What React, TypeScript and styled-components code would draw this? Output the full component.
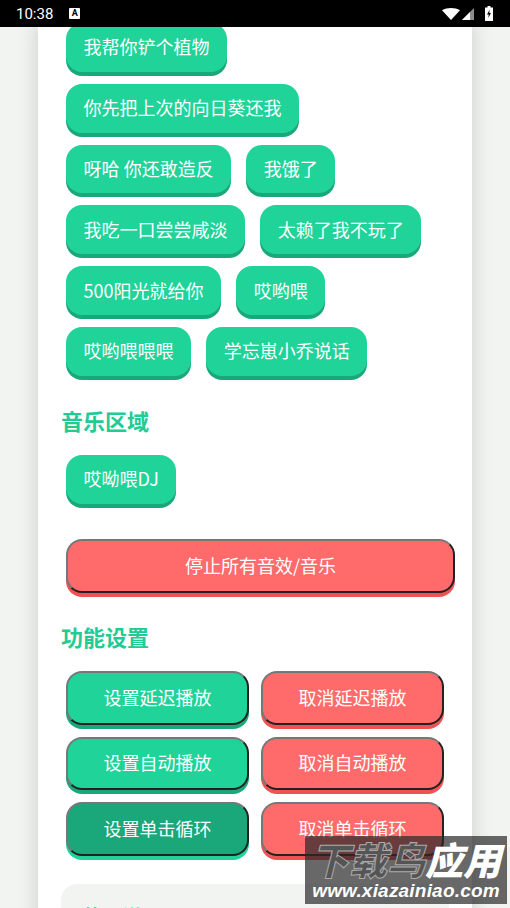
import React from 'react';
import styled, {createGlobalStyle} from 'styled-components';

const GlobalStyle = createGlobalStyle`
    html, body {
        margin: 0;
        padding: 0;
        height: 100%;
        background: #f2f4f2;
    }
`

const voiceRows = [
    ['我帮你铲个植物'],
    ['你先把上次的向日葵还我'],
    ['呀哈 你还敢造反', '我饿了'],
    ['我吃一口尝尝咸淡', '太赖了我不玩了'],
    ['500阳光就给你', '哎哟喂'],
    ['哎哟喂喂喂', '学忘崽小乔说话'],
];

const settingRows = [
    {set: '设置延迟播放', cancel: '取消延迟播放', active: false},
    {set: '设置自动播放', cancel: '取消自动播放', active: false},
    {set: '设置单击循环', cancel: '取消单击循环', active: true},
];

export default function App() {
    return (
        <Screen>
            <GlobalStyle/>
            <StatusBar>
                <StatusLeft>
                    <Clock>10:38</Clock>
                    <NoticeIcon>A</NoticeIcon>
                </StatusLeft>
                <StatusRight>
                    <svg width="18" height="12" viewBox="0 0 18 12">
                        <path d="M0 2.200C2.500 .7 5.800 0 9 0s6.500 .7 9 2.200L9 12z" fill="#fff"/>
                    </svg>
                    <svg width="12" height="12" viewBox="0 0 12 12">
                        <path d="M12 0v12H0z" fill="#fff" opacity=".55"/>
                        <path d="M8 4v8H0z" fill="#fff"/>
                    </svg>
                    <svg width="8" height="15" viewBox="0 0 8 15">
                        <path d="M2.500 0h3v1.500H8V15H0V1.500h2.500z" fill="#fff"/>
                        <path d="M4.800 3.500 2 8.500h1.800l-.6 3.500 2.800-5H4.200z" fill="#000"/>
                    </svg>
                </StatusRight>
            </StatusBar>
            <Viewport>
                <Card>
                    <ButtonGroup>
                        {voiceRows.map((row) => (
                            <ButtonRow key={row[0]}>
                                {row.map((label) => <SoundButton key={label}>{label}</SoundButton>)}
                            </ButtonRow>
                        ))}
                    </ButtonGroup>
                    <SectionTitle>音乐区域</SectionTitle>
                    <ButtonRow>
                        <SoundButton>哎呦喂DJ</SoundButton>
                    </ButtonRow>
                    <StopButton>停止所有音效/音乐</StopButton>
                    <SettingsTitle>功能设置</SettingsTitle>
                    <SettingsGroup>
                        {settingRows.map((row) => (
                            <ButtonRow key={row.set}>
                                <SettingButton $active={row.active}>{row.set}</SettingButton>
                                <CancelButton>{row.cancel}</CancelButton>
                            </ButtonRow>
                        ))}
                    </SettingsGroup>
                    <InfoPanel>
                        <InfoTitle>使用说明</InfoTitle>
                    </InfoPanel>
                </Card>
                <Watermark>
                    <WatermarkTitle>
                        <OutlineText>下载鸟</OutlineText>
                        <SolidText>应用</SolidText>
                    </WatermarkTitle>
                    <WatermarkUrl>www.xiazainiao.com</WatermarkUrl>
                </Watermark>
            </Viewport>
        </Screen>
    );
}

const Screen = styled.div`
    width: 510px;
    height: 908px;
    overflow: hidden;
    display: flex;
    flex-direction: column;
    background: #f2f4f2;
    font-family: "Noto Sans CJK SC", "Noto Sans", sans-serif;
`

const StatusBar = styled.div`
    flex: 0 0 27px;
    background: #000;
    display: flex;
    align-items: center;
    justify-content: space-between;
    padding: 0 17px 0 16px;
    position: relative;
    z-index: 2;
`

const StatusLeft = styled.div`
    display: flex;
    align-items: center;
    gap: 16px;
`

const Clock = styled.span`
    font-family: Roboto, sans-serif;
    font-size: 15px;
    color: #fff;
`

const NoticeIcon = styled.span`
    width: 11px;
    height: 11px;
    border-radius: 1px;
    background: #fff;
    color: #000;
    font-family: Roboto, sans-serif;
    font-size: 9px;
    font-weight: 700;
    line-height: 11px;
    text-align: center;
`

const StatusRight = styled.div`
    display: flex;
    align-items: center;
    gap: 2px;

    svg:last-child {
        margin-left: 9px;
    }
`

const Viewport = styled.div`
    flex: 1;
    position: relative;
    overflow: hidden;
    padding: 0 38px;
`

const Card = styled.div`
    margin-top: -4px;
    background: #fff;
    box-shadow: 0 0 20px rgba(0, 0, 0, 0.16);
    padding: 0 23px;
    height: 1000px;
`

const ButtonGroup = styled.div`
    display: flex;
    flex-direction: column;
    gap: 8px;
`

const ButtonRow = styled.div`
    display: flex;
    gap: 15px;
    padding-left: 5px;
`

const BaseButton = styled.div`
    box-sizing: border-box;
    height: 48.800px;
    margin-bottom: 4px;
    padding-bottom: 2px;
    border-radius: 16px;
    color: #fff;
    font-size: 18px;
    display: flex;
    align-items: center;
    justify-content: center;
`

const SoundButton = styled(BaseButton)`
    padding-left: 17.600px;
    padding-right: 17.600px;
    background: #20d398;
    box-shadow: 0 4px 0 #1aa87a;
`

const SectionTitle = styled.h2`
    margin: 24px 0 18px;
    font-size: 22px;
    line-height: 33px;
    font-weight: 700;
    color: #20cc94;
`

const SettingsTitle = styled(SectionTitle)`
    margin: 27px 0 18.400px;
`

const OutsetButton = styled(BaseButton)`
    border-style: solid;
    border-width: 2.500px;
    border-color: #777 #222 #222 #777;
`

const StopButton = styled(OutsetButton)`
    margin: 31px 0 0 5px;
    width: 389px;
    height: 54px;
    background: #ff6b6b;
    box-shadow: 0 4px 0 #ee5253;
`

const SettingsGroup = styled.div`
    display: flex;
    flex-direction: column;
    gap: 8px;

    ${ButtonRow} {
        gap: 12px;
    }
`

const SettingButton = styled(OutsetButton)<{$active: boolean}>`
    width: 183px;
    height: 53.600px;
    background: ${(props) => props.$active ? '#1aa87a' : '#20d398'};
    box-shadow: 0 4px 0 ${(props) => props.$active ? '#20d398' : '#1aa87a'};
`

const CancelButton = styled(OutsetButton)`
    width: 183px;
    height: 53.600px;
    background: #ff6b6b;
    box-shadow: 0 4px 0 #ee5253;
`

const InfoPanel = styled.div`
    margin-top: 24px;
    height: 120px;
    background: #f2f4f2;
    border-radius: 16px;
    padding: 18px 21px;
`

const InfoTitle = styled.div`
    font-size: 20px;
    line-height: 30px;
    font-weight: 700;
    color: #20cc94;
`

const Watermark = styled.div`
    position: absolute;
    left: 305px;
    top: 809px;
    width: 202px;
    height: 68px;
    background: rgba(40, 40, 40, 0.7);
    display: flex;
    flex-direction: column;
    align-items: center;
`

const WatermarkTitle = styled.div`
    display: flex;
    font-size: 38px;
    line-height: 45px;
    font-weight: 900;
    font-style: italic;
`

const OutlineText = styled.span`
    color: #555;
    -webkit-text-stroke: 1px #aaa;
`

const SolidText = styled.span`
    color: #fff;
`

const WatermarkUrl = styled.div`
    font-family: "Liberation Sans", sans-serif;
    font-size: 19px;
    line-height: 20px;
    font-weight: 700;
    font-style: italic;
    letter-spacing: 0.2px;
    color: #fff;
`
